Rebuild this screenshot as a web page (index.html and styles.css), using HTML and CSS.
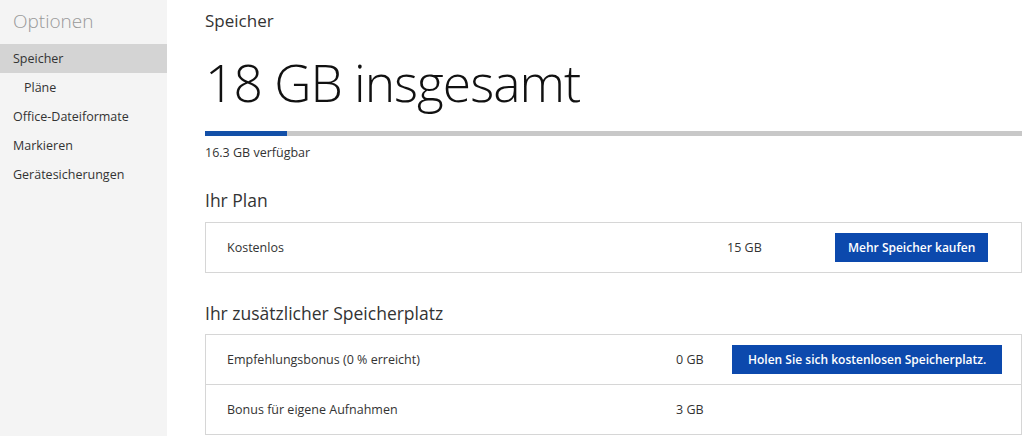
FILE: index.html
```html
<!DOCTYPE html>
<html lang="de">
<head>
  <meta charset="UTF-8" />
  <title>Optionen – Speicher</title>
  <link rel="stylesheet" href="styles.css">
</head>
<body>

<div class="page">
  <!-- Sidebar -->
  <nav class="sidebar">
    <h1 class="sidebar-title">Optionen</h1>
    <a class="nav-item active">Speicher</a>
    <a class="nav-item sub">Pläne</a>
    <a class="nav-item">Office-Dateiformate</a>
    <a class="nav-item">Markieren</a>
    <a class="nav-item">Gerätesicherungen</a>
  </nav>

  <!-- Main -->
  <main class="content">
    <h2 class="page-title">Speicher</h2>
    <div class="total">18 GB insgesamt</div>

    <div class="usage-bar">
      <div class="usage-fill" style="width: 10%;"></div>
    </div>
    <p class="available">16.3 GB verfügbar</p>

    <h3 class="section-title">Ihr Plan</h3>
    <div class="box plan">
      <div class="row">
        <span class="label">Kostenlos</span>
        <span class="amount">15 GB</span>
        <button>Mehr Speicher kaufen</button>
      </div>
    </div>

    <h3 class="section-title">Ihr zusätzlicher Speicherplatz</h3>
    <div class="box extra">
      <div class="row">
        <span class="label">Empfehlungsbonus (0 % erreicht)</span>
        <span class="amount">0 GB</span>
        <button class="wide">Holen Sie sich kostenlosen Speicherplatz.</button>
      </div>
      <div class="row">
        <span class="label">Bonus für eigene Aufnahmen</span>
        <span class="amount">3 GB</span>
      </div>
    </div>
  </main>
</div>

</body>
</html>
```

FILE: styles.css
```css
body {
  font-family: "Open Sans", "Noto Sans", sans-serif;
  background: #fff;
  color: #333;
  margin: 0;
  padding: 0;
}
.page {
  display: flex;
  min-height: 436px;
}
.sidebar {
  width: 167px;
  flex-shrink: 0;
  background: #f4f4f4;
  display: flex;
  flex-direction: column;
}
.sidebar-title {
  font-size: 19px;
  font-weight: 300;
  color: #999;
  margin: 0;
  padding: 8px 0 0 13px;
  line-height: 26px;
  height: 44px;
  box-sizing: border-box;
}
.nav-item {
  display: block;
  font-size: 12.5px;
  color: #333;
  line-height: 29px;
  padding-left: 13px;
}
.nav-item.active {
  background: #d4d4d4;
}
.nav-item.sub {
  padding-left: 24px;
}
.content {
  flex: 1;
  padding: 0 2px 0 38px;
}
.page-title {
  font-size: 17px;
  font-weight: 400;
  margin: 0;
  padding-top: 9px;
  line-height: 24px;
}
.total {
  font-size: 51.5px;
  font-weight: 300;
  color: #111;
  line-height: 72px;
  margin-top: 13px;
  letter-spacing: -1px;
}
.usage-bar {
  height: 5px;
  background: #c8c8c8;
  margin-top: 13px;
}
.usage-fill {
  height: 100%;
  background: #1350a8;
}
.available {
  font-size: 12.5px;
  margin: 8px 0 0;
  line-height: 18px;
}
.section-title {
  font-size: 17.5px;
  font-weight: 400;
  margin: 0;
  padding: 26px 0 10px;
  line-height: 24px;
}
.plan + .section-title {
  padding: 28px 0 9px;
}
.box {
  border: 1px solid #d6d6d6;
}
.row {
  display: grid;
  align-items: center;
  height: 49px;
  padding-left: 21px;
  font-size: 12.5px;
}
.row + .row {
  border-top: 1px solid #d6d6d6;
}
.plan .row {
  grid-template-columns: 500px 108px auto;
}
.extra .row {
  grid-template-columns: 449px 56px auto;
}
button {
  font-family: inherit;
  font-size: 12px;
  font-weight: 600;
  color: #fff;
  background: #0c49ad;
  border: none;
  height: 29px;
  padding: 0 13px;
  cursor: pointer;
  justify-self: start;
}
button.wide {
  padding: 0 16px;
}
```
